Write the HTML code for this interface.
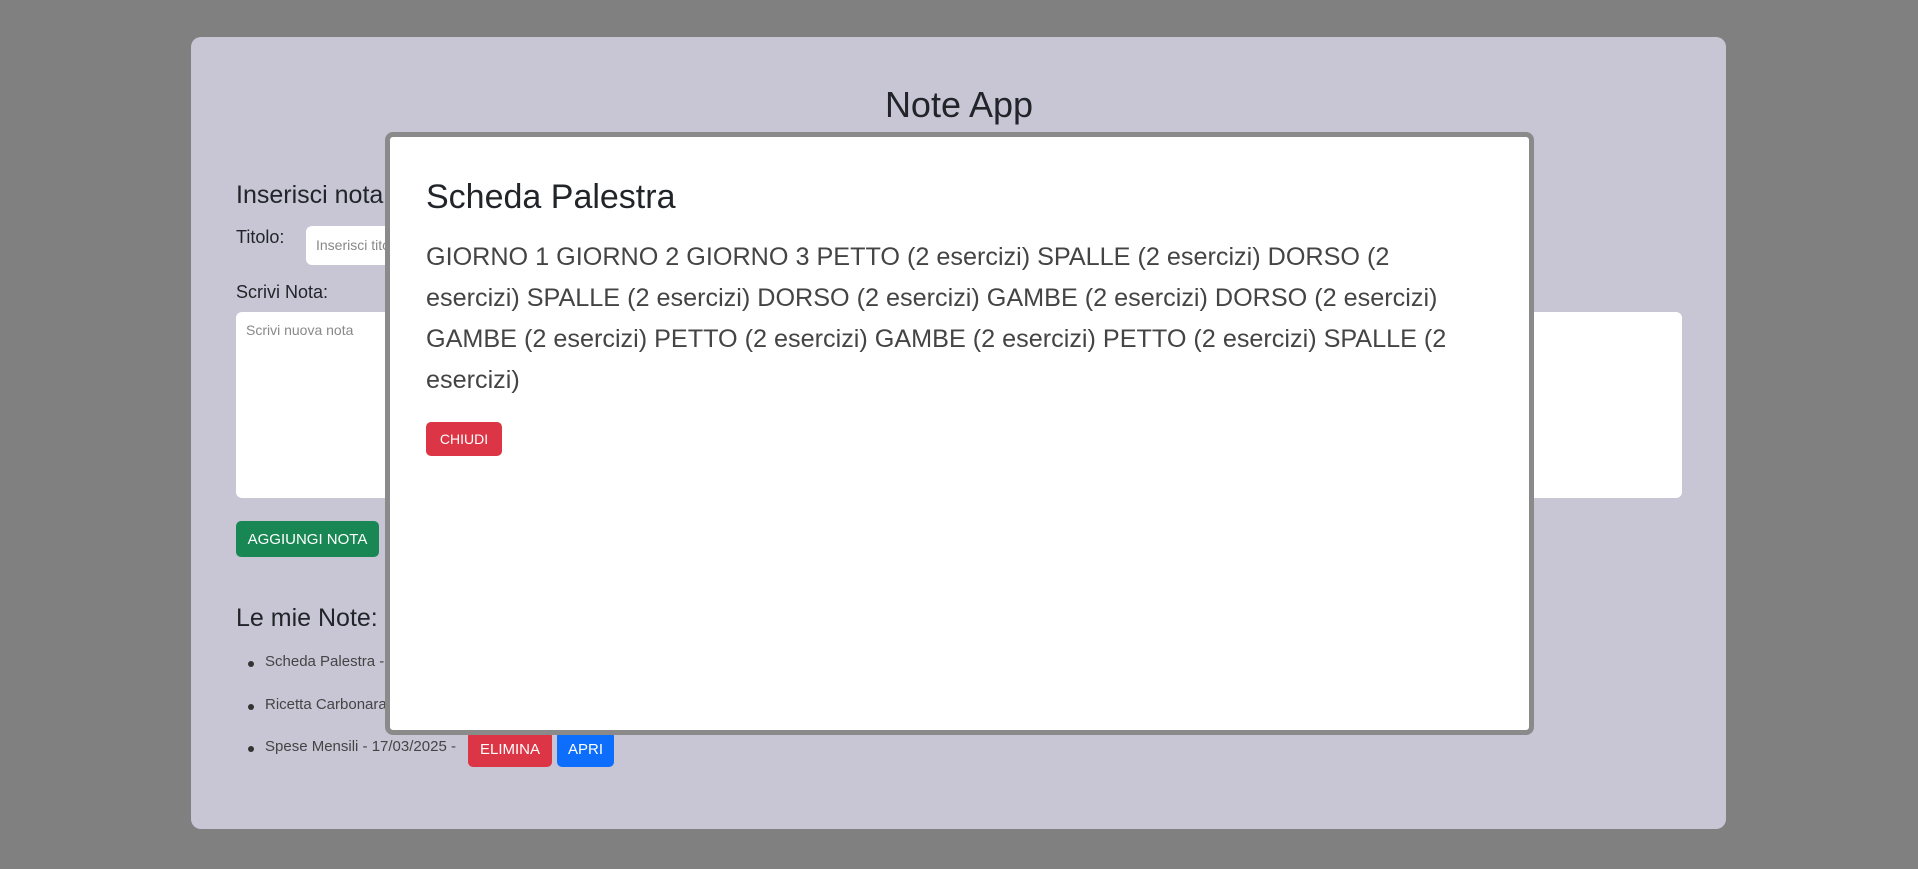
<!DOCTYPE html>
<html><head><meta charset="utf-8"><style>
*{box-sizing:border-box;margin:0;padding:0}
body{width:1918px;height:869px;background:#808080;font-family:"Liberation Sans",sans-serif;position:relative;overflow:hidden;color:#212529}
.card{position:absolute;left:191px;top:37px;width:1535px;height:792px;background:#c8c6d5;border-radius:10px}
.abs{position:absolute;white-space:nowrap}
.btn{position:absolute;color:#fff;font-size:15px;border-radius:5px;display:flex;align-items:center;justify-content:center}
.modal{position:absolute;left:385px;top:132px;width:1149px;height:603px;background:#fff;border:5px solid #8a8a8a;border-radius:8px}
.dot{position:absolute;width:6px;height:6px;border-radius:50%;background:#333}
</style></head><body>
<div class="card"></div>
<div class="abs" style="left:0;width:1918px;text-align:center;top:84px;font-size:36px">Note App</div>
<div class="abs" style="left:236px;top:181px;font-size:25px">Inserisci nota</div>
<div class="abs" style="left:236px;top:227px;font-size:18px">Titolo:</div>
<div class="abs" style="left:306px;top:226px;width:300px;height:39px;background:#fff;border-radius:6px;padding:11px 10px;font-size:14px;color:#888">Inserisci titolo</div>
<div class="abs" style="left:236px;top:282px;font-size:18px">Scrivi Nota:</div>
<div class="abs" style="left:236px;top:312px;width:1446px;height:186px;background:#fff;border-radius:6px;padding:10px;font-size:14px;color:#888">Scrivi nuova nota</div>
<div class="btn" style="left:236px;top:521px;width:143px;height:36px;background:#198754">AGGIUNGI NOTA</div>
<div class="abs" style="left:236px;top:604px;font-size:25px">Le mie Note:</div>
<div class="dot" style="left:248px;top:661px"></div>
<div class="dot" style="left:248px;top:704px"></div>
<div class="dot" style="left:248px;top:746px"></div>
<div class="abs" style="left:265px;top:653px;font-size:15px;color:#444">Scheda Palestra - 17/03/2025 -</div>
<div class="abs" style="left:265px;top:696px;font-size:15px;color:#444">Ricetta Carbonara - 17/03/2025 -</div>
<div class="abs" style="left:265px;top:738px;font-size:15px;color:#444">Spese Mensili - 17/03/2025 -</div>
<div class="btn" style="left:468px;top:731px;width:84px;height:36px;background:#dc3545">ELIMINA</div>
<div class="btn" style="left:557px;top:731px;width:57px;height:36px;background:#0d6efd">APRI</div>
<div class="modal">
<div class="abs" style="left:36px;top:41px;font-size:34px;color:#212529">Scheda Palestra</div>
<div class="abs" style="left:36px;top:100px;font-size:25.2px;line-height:41px;color:#444">GIORNO 1 GIORNO 2 GIORNO 3 PETTO (2 esercizi) SPALLE (2 esercizi) DORSO (2<br>esercizi) SPALLE (2 esercizi) DORSO (2 esercizi) GAMBE (2 esercizi) DORSO (2 esercizi)<br>GAMBE (2 esercizi) PETTO (2 esercizi) GAMBE (2 esercizi) PETTO (2 esercizi) SPALLE (2<br>esercizi)</div>
<div class="btn" style="left:36px;top:285px;width:76px;height:34px;background:#dc3545;font-size:14px">CHIUDI</div>
</div>
</body></html>
